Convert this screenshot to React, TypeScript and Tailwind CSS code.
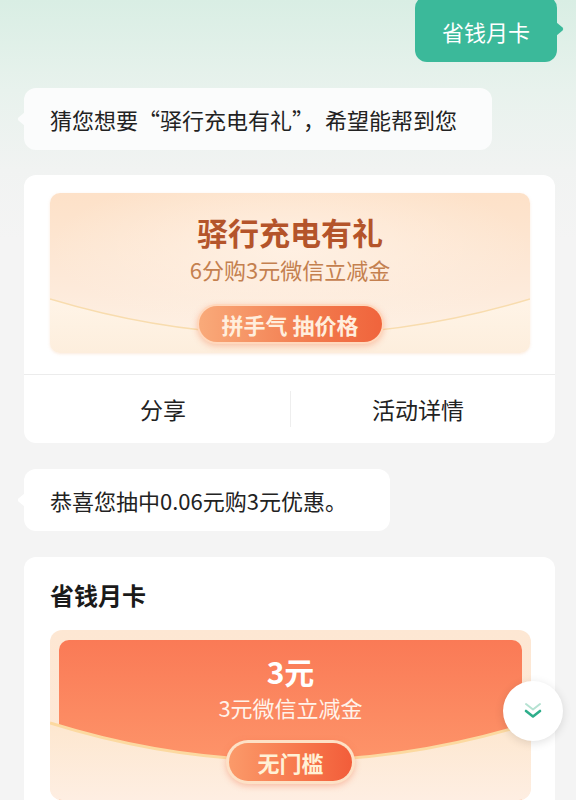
const font = { fontFamily: '"Noto Sans CJK SC", "Noto Sans", sans-serif' };

const Tail = ({ side, color }: { side: "left" | "right"; color: string }) => (
  <svg
    width="8"
    height="14"
    viewBox="0 0 8 14"
    className={side === "left" ? "absolute left-[-7px] top-1/2 -translate-y-1/2" : "absolute right-[-7px] top-1/2 -translate-y-1/2"}
  >
    {side === "left" ? (
      <path d="M8 0 L1.5 5.5 Q0 7 1.5 8.5 L8 14 Z" fill={color} />
    ) : (
      <path d="M0 0 L6.5 5.5 Q8 7 6.5 8.5 L0 14 Z" fill={color} />
    )}
  </svg>
);

const App = () => {
  return (
    <div
      className="relative w-[576px] h-[800px] overflow-hidden bg-[linear-gradient(180deg,#d9eee4_0px,#e8f2ed_90px,#f1f3f2_170px,#f4f4f4_240px)] pl-[24px] pr-[21px]"
      style={font}
    >
      {/* user message */}
      <div className="flex justify-end -mt-[4px] mr-[-2px]">
        <div className="relative flex h-[66px] w-[142px] items-center justify-center rounded-[12px] bg-[#3bb99a] pt-[4px] text-[22px] text-white">
          省钱月卡
          <Tail side="right" color="#3bb99a" />
        </div>
      </div>

      {/* bot reply */}
      <div className="mt-[26px] flex">
        <div className="relative flex h-[62px] w-[468px] items-center rounded-[12px] bg-[#fbfcfc] pl-[26px] text-[22px] text-[#222]">
          猜您想要“驿行充电有礼”，希望能帮到您
          <Tail side="left" color="#fbfcfc" />
        </div>
      </div>

      {/* activity card */}
      <div className="mt-[25px] h-[268px] rounded-[12px] bg-white">
        <div className="px-[25px] pl-[26px] pt-[18px]">
          <div className="relative h-[160px] overflow-hidden rounded-[10px] bg-[linear-gradient(180deg,#fde1c8_0%,#fdeada_60%,#fef3e8_100%)] shadow-[0_1px_3px_rgba(240,170,120,0.25)]">
            <svg className="absolute inset-0" width="480" height="160" viewBox="0 0 480 160">
              <defs>
                <linearGradient id="c1" x1="0" y1="0" x2="0" y2="1">
                  <stop offset="0" stopColor="#fff4e7" />
                  <stop offset="1" stopColor="#fdeedd" />
                </linearGradient>
                <radialGradient id="g1" cx="0.5" cy="0.35" r="0.5">
                  <stop offset="0" stopColor="#fff1e4" stopOpacity="0.9" />
                  <stop offset="1" stopColor="#fff1e4" stopOpacity="0" />
                </radialGradient>
              </defs>
              <rect x="0" y="0" width="480" height="160" fill="url(#g1)" />
              <path d="M0 106 Q240 178 480 106 L480 160 L0 160 Z" fill="url(#c1)" />
              <path d="M0 106 Q240 178 480 106" fill="none" stroke="#f8dcae" strokeWidth="1.5" />
            </svg>
            <div className="relative z-10 flex flex-col items-center pt-[20px]">
              <div className="text-[31px] font-bold leading-[38px] text-[#b4542a]">驿行充电有礼</div>
              <div className="mt-[2px] text-[22px] leading-[32px] text-[#c4804f]">6分购3元微信立减金</div>
              <div className="mt-[19px] rounded-full bg-[#ffd8bd] p-[2px] shadow-[0_2px_6px_rgba(240,110,60,0.35)]">
                <div className="flex h-[36px] w-[183px] items-center justify-center rounded-full bg-[linear-gradient(90deg,#f9aa7a,#f27b4e_60%,#f0643c)] text-[22px] font-bold text-[#ffeedd]">
                  拼手气 抽价格
                </div>
              </div>
            </div>
          </div>
        </div>
        <div className="mt-[21px] flex h-[69px] items-center border-t border-[#ececec] text-[23px] text-[#222]">
          <div className="flex-1 pl-[12px] text-center">分享</div>
          <div className="h-[36px] w-px bg-[#eeeeee]" />
          <div className="flex-1 pr-[10px] text-center">活动详情</div>
        </div>
      </div>

      {/* result message */}
      <div className="mt-[26px] flex">
        <div className="relative flex h-[62px] w-[366px] items-center rounded-[12px] bg-white pl-[26px] text-[22px] text-[#222]">
          恭喜您抽中0.06元购3元优惠。
          <Tail side="left" color="#ffffff" />
        </div>
      </div>

      {/* monthly card */}
      <div className="mt-[26px] h-[300px] rounded-[12px] bg-white px-[24px] pl-[26px] pt-[22px]">
        <div className="text-[24px] font-bold leading-[32px] text-[#1a1a1a]">省钱月卡</div>
        <div className="relative mt-[19px] h-[170px] overflow-hidden rounded-[12px] bg-[linear-gradient(180deg,#fde7d3,#fee9d8)] px-[9px] pt-[10px]">
          <div className="flex h-[160px] flex-col items-center rounded-t-[10px] bg-[linear-gradient(180deg,#fa7a56,#fd9268_70%,#fc9e70)] pt-[12px]">
            <div className="relative z-10 text-[30px] font-bold leading-[38px] text-white">3元</div>
            <div className="relative z-10 mt-[2px] text-[22px] leading-[30px] text-[#fff3ea]">3元微信立减金</div>
            <div className="relative z-10 mt-[18px] rounded-full bg-[#fde1c6] p-[3px] shadow-[0_2px_6px_rgba(240,100,60,0.35)]">
              <div className="flex h-[38px] w-[123px] items-center justify-center rounded-full bg-[linear-gradient(90deg,#fb9a6a,#f7764b_60%,#f25d3a)] text-[22px] font-bold text-[#fff1d6]">
                无门槛
              </div>
            </div>
          </div>
          <svg className="absolute inset-0" width="481" height="170" viewBox="0 0 481 170">
            <defs>
              <linearGradient id="c2" x1="0" y1="0" x2="0" y2="1">
                <stop offset="0" stopColor="#fde7cf" />
                <stop offset="1" stopColor="#feeee2" />
              </linearGradient>
            </defs>
            <path d="M0 93 Q240 168 481 93 L481 170 L0 170 Z" fill="url(#c2)" />
            <path d="M0 93 Q240 168 481 93" fill="none" stroke="#fcd9a0" strokeWidth="3" />
          </svg>
        </div>
      </div>

      {/* scroll down */}
      <div className="absolute left-[503px] top-[681px] flex h-[60px] w-[60px] items-center justify-center rounded-full bg-white shadow-[0_2px_10px_rgba(0,0,0,0.12)]">
        <svg width="24" height="24" viewBox="0 0 24 24" fill="none" strokeLinecap="round" strokeLinejoin="round">
          <path d="M5 5 L12 10.5 L19 5" stroke="#b5e2d2" strokeWidth="2" />
          <path d="M5 12 L12 17.5 L19 12" stroke="#2eae8b" strokeWidth="2.6" />
        </svg>
      </div>
    </div>
  );
};

export default App;
